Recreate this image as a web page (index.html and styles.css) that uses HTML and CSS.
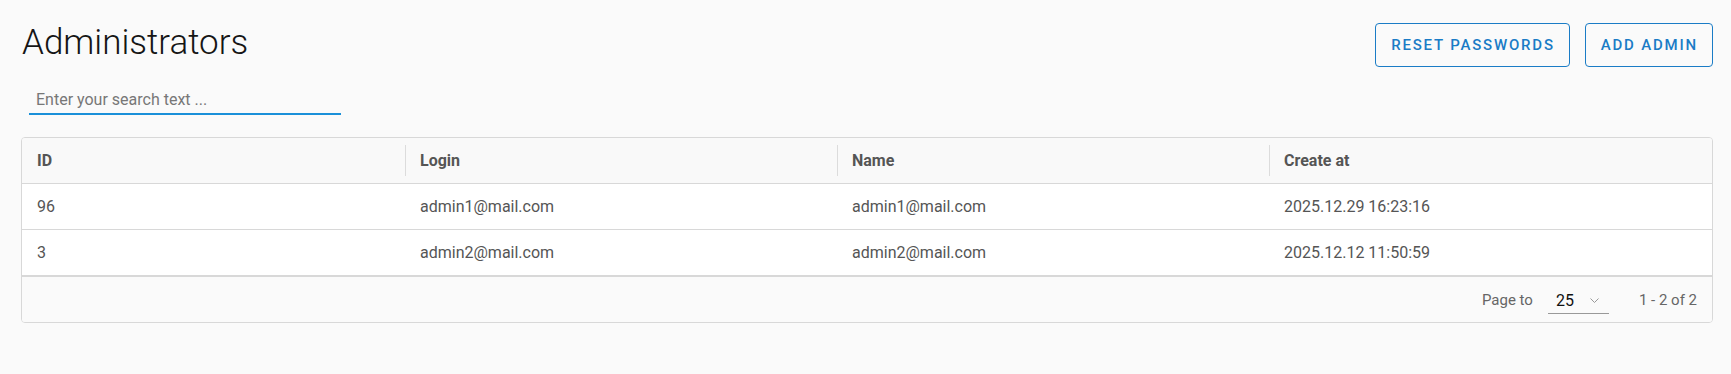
FILE: index.html
```html
<!DOCTYPE html>
<html lang="en">
<head>
  <meta charset="UTF-8">
  <title>Administrators</title>
  <link rel="stylesheet" href="styles.css">
</head>
<body>
  <div class="page">

    <!-- Title and actions -->
    <div class="top">
      <h1>Administrators</h1>
      <div class="actions">
        <button class="btn">Reset passwords</button>
        <button class="btn">Add admin</button>
      </div>
    </div>

    <div class="search-row">
      <input class="search" type="text" placeholder="Enter your search text ...">
    </div>

    <!-- Admins table -->
    <div class="card">
      <div class="row head">
        <div class="cell">ID</div>
        <div class="cell">Login</div>
        <div class="cell">Name</div>
        <div class="cell">Create at</div>
      </div>
      <div class="row">
        <div class="cell">96</div>
        <div class="cell">admin1@mail.com</div>
        <div class="cell">admin1@mail.com</div>
        <div class="cell">2025.12.29 16:23:16</div>
      </div>
      <div class="row">
        <div class="cell">3</div>
        <div class="cell">admin2@mail.com</div>
        <div class="cell">admin2@mail.com</div>
        <div class="cell">2025.12.12 11:50:59</div>
      </div>
      <div class="footer">
        <span class="label">Page to</span>
        <div class="select">
          <span>25</span>
          <svg width="9" height="5" viewBox="0 0 9 5"><path d="M0.5 0.5 L4.5 4.5 L8.5 0.5" fill="none" stroke="#999" stroke-width="1"/></svg>
        </div>
        <span class="range">1 - 2 of 2</span>
      </div>
    </div>

  </div>
</body>
</html>
```

FILE: styles.css
```css
body {
  margin: 0;
  background: #fafafa;
  font-family: Roboto, 'Noto Sans', sans-serif;
  color: #555;
}

.page {
  padding: 23px 18px 0 21px;
}

.top {
  display: flex;
  justify-content: space-between;
  align-items: flex-start;
}

h1 {
  margin: 0;
  padding-left: 1px;
  font-size: 35px;
  line-height: 40px;
  font-weight: 300;
  color: #151515;
}

.actions {
  display: flex;
  gap: 15px;
}

.btn {
  height: 44px;
  padding: 0 14px 0 15px;
  background: transparent;
  border: 1px solid #1a7cc6;
  border-radius: 4px;
  color: #1a7cc6;
  font-family: Roboto, sans-serif;
  font-size: 15px;
  font-weight: 500;
  letter-spacing: 1.8px;
  text-transform: uppercase;
  cursor: pointer;
}

.search-row {
  margin-top: 18px;
  padding-left: 8px;
}

.search {
  box-sizing: border-box;
  width: 312px;
  height: 30px;
  padding: 0 7px;
  border: none;
  border-bottom: 2px solid #1a90d9;
  background: transparent;
  font-family: Roboto, sans-serif;
  font-size: 16px;
  color: #333;
  outline: none;
}

.search::placeholder {
  color: #777;
}

.card {
  margin-top: 22px;
  border: 1px solid #d8d8d8;
  border-radius: 4px;
  overflow: hidden;
}

.row {
  display: grid;
  grid-template-columns: 383px 432px 432px 1fr;
  align-items: center;
  height: 45px;
  background: #fff;
  border-bottom: 1px solid #d8d8d8;
  font-size: 16px;
}

.cell {
  padding-left: 15px;
}

.head {
  background: #f9f9f9;
}

.head .cell {
  height: 31px;
  line-height: 31px;
  font-weight: 700;
  color: #555;
}

.head .cell + .cell {
  border-left: 1px solid #dcdcdc;
  padding-left: 14px;
}

.footer {
  display: flex;
  justify-content: flex-end;
  align-items: center;
  height: 45px;
  padding-right: 15px;
  border-top: 1px solid #d8d8d8;
  background: #fafafa;
  font-size: 15px;
  color: #666;
}

.select {
  display: flex;
  align-items: center;
  justify-content: space-between;
  box-sizing: border-box;
  width: 61px;
  height: 28px;
  margin: 0 30px 0 15px;
  padding: 2px 10px 0 8px;
  border-bottom: 1px solid #999;
  font-size: 16px;
  color: #111;
}
```
